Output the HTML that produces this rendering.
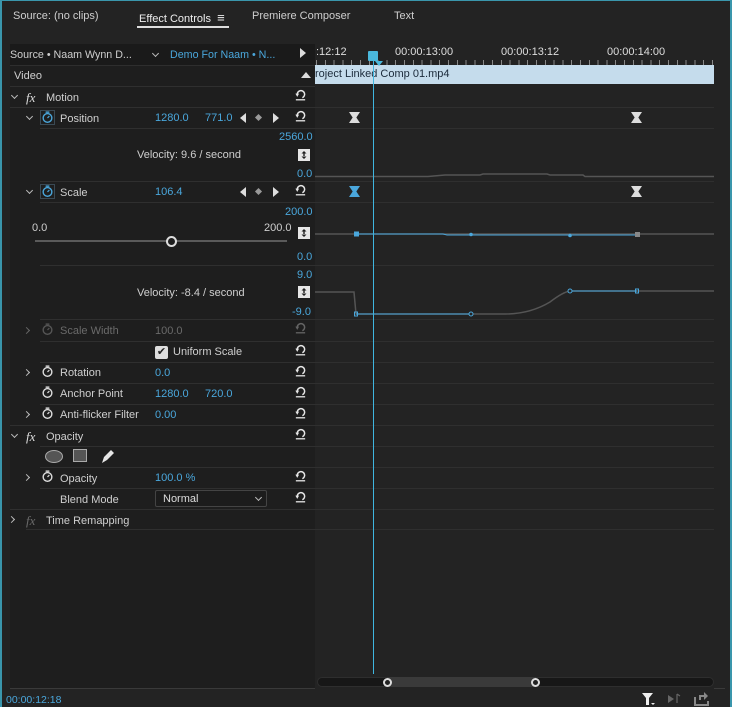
<!DOCTYPE html>
<html><head><style>
body{margin:0;width:732px;height:707px;background:#232323;overflow:hidden;font-family:"Liberation Sans",sans-serif;font-size:11px;color:#cfcfcf;position:relative}
.a{position:absolute;white-space:nowrap}
.b{color:#4aa7dc}
.sep{position:absolute;height:1px;background:#2f2f2f}
.g{color:#6a6a6a}
svg.i{position:absolute}
.cd,.cr{position:absolute;width:4px;height:4px;border-right:1.2px solid #bbb;border-bottom:1.2px solid #bbb}
.cd{transform:rotate(45deg)}
.cr{transform:rotate(-45deg)}
</style></head><body>
<svg width="0" height="0" style="position:absolute"><defs>
<symbol id="rs" viewBox="0 0 14 14"><path d="M3.5 7.5 A4 4 0 1 1 9 10.5" fill="none" stroke="#e6e6e6" stroke-width="1.6"/><path d="M1.5 6 L5.5 6 L3.5 9.5Z" fill="#e6e6e6"/><rect x="2" y="12" width="10" height="1.4" fill="#e6e6e6"/></symbol>
<symbol id="sw" viewBox="0 0 14 14"><circle cx="7" cy="8" r="4.7" fill="none" stroke="currentColor" stroke-width="1.5"/><rect x="5" y="1" width="4" height="1.5" fill="currentColor"/><path d="M7 8 L9 6" stroke="currentColor" stroke-width="1.3"/></symbol>
<symbol id="ud" viewBox="0 0 12 12"><rect width="12" height="12" fill="#e6e6e6"/><path d="M6 2 L8.5 4.5 L3.5 4.5Z M6 10 L8.5 7.5 L3.5 7.5Z M5.3 4 H6.7 V8 H5.3Z" fill="#1e1e1e"/></symbol>
<symbol id="kf" viewBox="0 0 12 12"><path d="M0 0 H12 L8 6 L12 12 H0 L4 6Z" fill="currentColor"/></symbol>
</defs></svg>
<div class="a" style="left:0;top:0;height:707px;border-left:2px solid #3a96ac;border-top:1px solid #3a96ac;border-right:2px solid #3a96ac;box-sizing:border-box;width:732px"></div>
<div class="a" style="left:13px;top:10px;font-size:11px">Source: (no clips)</div>
<div class="a" style="left:139px;top:10px;font-size:11px;color:#eee">Effect Controls &nbsp;<span style="font-size:13px">≡</span></div>
<div class="a" style="left:137px;top:26px;width:92px;height:2px;background:#ddd"></div>
<div class="a" style="left:252px;top:10px;font-size:11px">Premiere Composer</div>
<div class="a" style="left:394px;top:10px;font-size:11px">Text</div>
<div class="a" style="left:10px;top:44px;width:305px;height:644px;background:#1e1e1e;border-bottom:1px solid #3a3a3a"></div>
<div class="a" style="left:10px;top:44px;width:305px;height:21px;background:#1a1a1a;border-bottom:1px solid #2e2e2e"></div>
<div class="a" style="left:10px;top:49px;font-size:10.7px">Source • Naam Wynn D...</div>
<div class="cd" style="left:153px;top:51px"></div>
<div class="a b" style="left:170px;top:49px;font-size:10.7px">Demo For Naam • N...</div>
<div class="a" style="left:300px;top:48px;width:0;height:0;border-left:6px solid #ddd;border-top:5px solid transparent;border-bottom:5px solid transparent"></div>
<div class="a" style="left:14px;top:70px">Video</div>
<div class="a" style="left:301px;top:72px;width:0;height:0;border-bottom:6px solid #ddd;border-left:5px solid transparent;border-right:5px solid transparent"></div>
<div class="sep" style="left:10px;top:86px;width:305px"></div>
<div class="a" style="left:316px;top:46px;color:#ddd">:12:12</div>
<div class="a" style="left:395px;top:46px;color:#ddd">00:00:13:00</div>
<div class="a" style="left:501px;top:46px;color:#ddd">00:00:13:12</div>
<div class="a" style="left:607px;top:46px;color:#ddd">00:00:14:00</div>
<div class="a" style="left:316px;top:60px;width:398px;height:5px;background:repeating-linear-gradient(90deg,#888 0 1px,transparent 1px 8.8px)"></div>
<div class="a" style="left:315px;top:65px;width:399px;height:19px;background:#c5dcec;color:#1b2a3a;line-height:19px">roject Linked Comp 01.mp4</div>
<div class="sep" style="left:10px;top:107px;width:704px"></div>
<div class="sep" style="left:40px;top:128px;width:674px"></div>
<div class="sep" style="left:40px;top:181px;width:674px"></div>
<div class="sep" style="left:40px;top:202px;width:674px"></div>
<div class="sep" style="left:40px;top:265px;width:674px"></div>
<div class="sep" style="left:40px;top:319px;width:674px"></div>
<div class="sep" style="left:40px;top:341px;width:674px"></div>
<div class="sep" style="left:40px;top:362px;width:674px"></div>
<div class="sep" style="left:40px;top:383px;width:674px"></div>
<div class="sep" style="left:40px;top:404px;width:674px"></div>
<div class="sep" style="left:10px;top:425px;width:704px"></div>
<div class="sep" style="left:40px;top:446px;width:674px"></div>
<div class="sep" style="left:40px;top:467px;width:674px"></div>
<div class="sep" style="left:40px;top:488px;width:674px"></div>
<div class="sep" style="left:10px;top:509px;width:704px"></div>
<div class="sep" style="left:26px;top:529px;width:688px"></div>
<div class="cd" style="left:12px;top:93px"></div>
<div class="a" style="left:26px;top:90px;font-style:italic;font-family:'Liberation Serif',serif;font-size:13px;color:#ddd">fx</div>
<div class="a" style="left:46px;top:92px">Motion</div>
<div class="cd" style="left:27px;top:114px"></div>
<div class="a" style="left:40px;top:110px;width:15px;height:15px;border:1px solid #3a4a55;box-sizing:border-box"></div>
<svg class="i" style="left:41px;top:110px;color:#4aa7dc" width="13" height="14"><use href="#sw"/></svg>
<div class="a" style="left:60px;top:113px">Position</div>
<div class="a b" style="left:155px;top:112px">1280.0</div>
<div class="a b" style="left:205px;top:112px">771.0</div>
<div class="a" style="left:240px;top:113px;width:0;height:0;border-right:6px solid #ddd;border-top:5px solid transparent;border-bottom:5px solid transparent"></div>
<div class="a" style="left:256px;top:115px;width:5px;height:5px;background:#999;transform:rotate(45deg)"></div>
<div class="a" style="left:273px;top:113px;width:0;height:0;border-left:6px solid #ddd;border-top:5px solid transparent;border-bottom:5px solid transparent"></div>
<div class="a b" style="left:279px;top:131px">2560.0</div>
<div class="a" style="left:137px;top:149px">Velocity: 9.6 / second</div>
<svg class="i" style="left:298px;top:149px" width="12" height="12"><use href="#ud"/></svg>
<div class="a b" style="left:297px;top:168px">0.0</div>
<div class="cd" style="left:27px;top:188px"></div>
<div class="a" style="left:40px;top:184px;width:15px;height:15px;border:1px solid #3a4a55;box-sizing:border-box"></div>
<svg class="i" style="left:41px;top:184px;color:#4aa7dc" width="13" height="14"><use href="#sw"/></svg>
<div class="a" style="left:60px;top:187px">Scale</div>
<div class="a b" style="left:155px;top:186px">106.4</div>
<div class="a" style="left:240px;top:187px;width:0;height:0;border-right:6px solid #ddd;border-top:5px solid transparent;border-bottom:5px solid transparent"></div>
<div class="a" style="left:256px;top:189px;width:5px;height:5px;background:#999;transform:rotate(45deg)"></div>
<div class="a" style="left:273px;top:187px;width:0;height:0;border-left:6px solid #ddd;border-top:5px solid transparent;border-bottom:5px solid transparent"></div>
<div class="a b" style="left:285px;top:206px">200.0</div>
<div class="a" style="left:32px;top:222px">0.0</div>
<div class="a" style="left:264px;top:222px">200.0</div>
<div class="a" style="left:35px;top:240px;width:252px;height:2px;background:#5a5a5a"></div>
<div class="a" style="left:166px;top:236px;width:7px;height:7px;border:2px solid #ddd;border-radius:50%;background:#1e1e1e"></div>
<svg class="i" style="left:298px;top:227px" width="12" height="12"><use href="#ud"/></svg>
<div class="a b" style="left:297px;top:251px">0.0</div>
<div class="a b" style="left:297px;top:269px">9.0</div>
<div class="a" style="left:137px;top:287px">Velocity: -8.4 / second</div>
<svg class="i" style="left:298px;top:286px" width="12" height="12"><use href="#ud"/></svg>
<div class="a b" style="left:292px;top:306px">-9.0</div>
<div class="cr" style="left:24px;top:328px;border-color:#666"></div>
<svg class="i" style="left:41px;top:322px;color:#555" width="13" height="14"><use href="#sw"/></svg>
<div class="a g" style="left:60px;top:325px">Scale Width</div>
<div class="a g" style="left:155px;top:325px">100.0</div>
<svg class="i" style="left:294px;top:321px;opacity:.35" width="13" height="13"><use href="#rs"/></svg>
<div class="a" style="left:155px;top:346px;width:13px;height:13px;background:#ddd;border-radius:2px;color:#222;font-size:11px;line-height:13px;text-align:center">✔</div>
<div class="a" style="left:173px;top:346px">Uniform Scale</div>
<div class="cr" style="left:24px;top:370px"></div>
<svg class="i" style="left:41px;top:364px;color:#ddd" width="13" height="14"><use href="#sw"/></svg>
<div class="a" style="left:60px;top:367px">Rotation</div>
<div class="a b" style="left:155px;top:367px">0.0</div>
<svg class="i" style="left:41px;top:385px;color:#ddd" width="13" height="14"><use href="#sw"/></svg>
<div class="a" style="left:60px;top:388px">Anchor Point</div>
<div class="a b" style="left:155px;top:388px">1280.0</div>
<div class="a b" style="left:205px;top:388px">720.0</div>
<div class="cr" style="left:24px;top:412px"></div>
<svg class="i" style="left:41px;top:406px;color:#ddd" width="13" height="14"><use href="#sw"/></svg>
<div class="a" style="left:60px;top:409px">Anti-flicker Filter</div>
<div class="a b" style="left:155px;top:409px">0.00</div>
<div class="cd" style="left:12px;top:432px"></div>
<div class="a" style="left:26px;top:429px;font-style:italic;font-family:'Liberation Serif',serif;font-size:13px;color:#ddd">fx</div>
<div class="a" style="left:46px;top:431px">Opacity</div>
<div class="a" style="left:45px;top:450px;width:16px;height:11px;border:1px solid #aaa;border-radius:50%;background:#555"></div>
<div class="a" style="left:73px;top:449px;width:14px;height:13px;border:1px solid #aaa;background:#555;box-sizing:border-box"></div>
<svg class="i" style="left:99px;top:448px" width="16" height="16"><path d="M3 15 L5 9 L10 4 L13 7 L8 12Z M10 4 L12 2 L15 5 L13 7" fill="#e6e6e6"/></svg>
<div class="cr" style="left:24px;top:475px"></div>
<svg class="i" style="left:41px;top:469px;color:#ddd" width="13" height="14"><use href="#sw"/></svg>
<div class="a" style="left:60px;top:473px">Opacity</div>
<div class="a b" style="left:155px;top:472px">100.0 %</div>
<div class="a" style="left:60px;top:494px">Blend Mode</div>
<div class="a" style="left:155px;top:490px;width:112px;height:17px;border:1px solid #444;border-radius:2px;box-sizing:border-box;background:#1c1c1c"></div>
<div class="a" style="left:163px;top:493px;color:#ddd">Normal</div>
<div class="cd" style="left:256px;top:495px"></div>
<div class="cr" style="left:9px;top:517px"></div>
<div class="a g" style="left:26px;top:513px;font-style:italic;font-family:'Liberation Serif',serif;font-size:13px">fx</div>
<div class="a" style="left:46px;top:515px">Time Remapping</div>
<svg class="i" style="left:294px;top:88px" width="13" height="13"><use href="#rs"/></svg>
<svg class="i" style="left:294px;top:109px" width="13" height="13"><use href="#rs"/></svg>
<svg class="i" style="left:294px;top:183px" width="13" height="13"><use href="#rs"/></svg>
<svg class="i" style="left:294px;top:343px" width="13" height="13"><use href="#rs"/></svg>
<svg class="i" style="left:294px;top:364px" width="13" height="13"><use href="#rs"/></svg>
<svg class="i" style="left:294px;top:385px" width="13" height="13"><use href="#rs"/></svg>
<svg class="i" style="left:294px;top:406px" width="13" height="13"><use href="#rs"/></svg>
<svg class="i" style="left:294px;top:427px" width="13" height="13"><use href="#rs"/></svg>
<svg class="i" style="left:294px;top:469px" width="13" height="13"><use href="#rs"/></svg>
<svg class="i" style="left:294px;top:490px" width="13" height="13"><use href="#rs"/></svg>
<svg class="i" style="left:349px;top:112px;color:#ddd" width="11" height="11"><use href="#kf"/></svg>
<svg class="i" style="left:631px;top:112px;color:#ddd" width="11" height="11"><use href="#kf"/></svg>
<svg class="i" style="left:349px;top:186px;color:#4aa7dc" width="11" height="11"><use href="#kf"/></svg>
<svg class="i" style="left:631px;top:186px;color:#ddd" width="11" height="11"><use href="#kf"/></svg>
<svg class="i" style="left:315px;top:130px" width="400" height="200">
<path d="M0 46.5 H113 L130 45 H165 L168 44 H232 L235 45 H268 L270 46.5 H399" stroke="#555" stroke-width="1.5" fill="none"/>
<path d="M0 104 H399" stroke="#555" stroke-width="1.5" fill="none"/>
<path d="M41 104 H128 L132 105 H156 H265 H322" stroke="#4aa7dc" stroke-width="1" fill="none"/>
<rect x="39" y="101.5" width="5" height="5" fill="#4aa7dc"/>
<circle cx="156" cy="104.5" r="1.8" fill="#4aa7dc"/><circle cx="255" cy="105.5" r="1.8" fill="#4aa7dc"/>
<rect x="320" y="102" width="5" height="5" fill="#888"/>
<path d="M0 162 H39 L41 184 H190 Q215 184 235 172 Q248 162 255 161 H322 H399" stroke="#555" stroke-width="1.5" fill="none"/>
<path d="M41 184 H156 M255 161 H322" stroke="#4aa7dc" stroke-width="1" fill="none"/>
<rect x="39.5" y="182" width="3" height="4" fill="none" stroke="#4aa7dc"/>
<circle cx="156" cy="184" r="2" fill="#232323" stroke="#4aa7dc"/>
<circle cx="255" cy="161" r="2" fill="#232323" stroke="#4aa7dc"/>
<rect x="320.5" y="159" width="3" height="4" fill="none" stroke="#4aa7dc"/>
</svg>
<div class="a" style="left:373px;top:58px;width:1px;height:616px;background:#3fb6e0"></div>
<div class="a" style="left:368px;top:51px;width:10px;height:10px;background:#4ab8dc;border-radius:1px"></div>
<div class="a" style="left:375px;top:61px;width:0;height:0;border-top:5px solid #4ab8dc;border-left:4px solid transparent;border-right:4px solid transparent"></div>
<div class="a" style="left:317px;top:677px;width:397px;height:10px;background:#171717;border:1px solid #2e2e2e;border-radius:6px;box-sizing:border-box"></div>
<div class="a" style="left:387px;top:677px;width:149px;height:10px;background:#3a3a3a"></div>
<div class="a" style="left:383px;top:678px;width:5px;height:5px;border:2px solid #ddd;border-radius:50%;background:#222"></div>
<div class="a" style="left:531px;top:678px;width:5px;height:5px;border:2px solid #ddd;border-radius:50%;background:#222"></div>
<div class="a" style="left:714px;top:688px;width:11px;height:1px;background:#3a3a3a"></div>
<div class="a b" style="left:6px;top:694px;font-size:10.5px">00:00:12:18</div>
<svg class="i" style="left:641px;top:692px" width="16" height="14"><path d="M1 1 H12 L8 6 V13 H5 V6Z" fill="#eee"/><path d="M10 11 H14 L12 13Z" fill="#eee"/></svg>
<svg class="i" style="left:667px;top:692px" width="16" height="14"><path d="M1 3 L7 7 L1 11Z" fill="#666"/><path d="M10 2 V11 M10 2 L13 4" stroke="#666" stroke-width="1.2" fill="none"/></svg>
<svg class="i" style="left:694px;top:692px" width="16" height="14"><path d="M1 5 V13 H14 V9" stroke="#888" stroke-width="2" fill="none"/><path d="M5 8 V3 H10 V0 L14 4 L10 8 V5 H7 V8Z" fill="#888"/></svg>
</body></html>
